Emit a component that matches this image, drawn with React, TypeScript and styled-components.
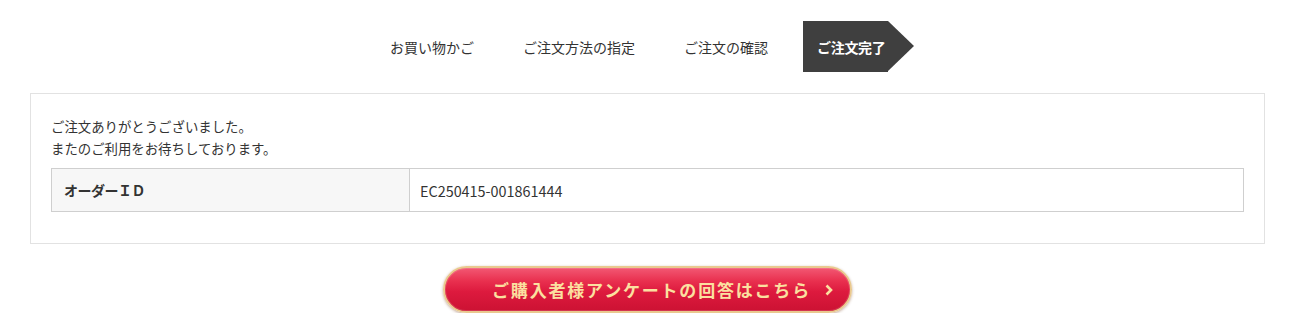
import styled, { createGlobalStyle } from "styled-components";

const GlobalStyle = createGlobalStyle`
  body {
    margin: 0;
    background: #fff;
    color: #333;
    font-family: "Noto Sans CJK JP", "Noto Sans", sans-serif;
  }
`;

const Page = styled.div`
  display: flex;
  flex-direction: column;
  align-items: center;
  padding-top: 21px;
`;

const Steps = styled.ol`
  list-style: none;
  margin: 0;
  padding: 0;
  display: flex;
  align-items: center;
  gap: 21px;
`;

const Step = styled.li<{ $active?: boolean }>`
  position: relative;
  display: flex;
  align-items: center;
  height: 51px;
  box-sizing: border-box;
  padding: ${(p) => (p.$active ? "0 1px 0 14px" : "0 14px")};
  width: ${(p) => (p.$active ? "85px" : "auto")};
  font-size: 14px;
  font-weight: ${(p) => (p.$active ? 700 : 400)};
  letter-spacing: ${(p) => (p.$active ? "-0.3px" : "0")};
  color: ${(p) => (p.$active ? "#fff" : "#333")};
  background: ${(p) => (p.$active ? "#3f3f3f" : "transparent")};
  white-space: nowrap;
  margin-right: ${(p) => (p.$active ? "31px" : "0")};

  &::after {
    content: "";
    display: ${(p) => (p.$active ? "block" : "none")};
    position: absolute;
    left: 100%;
    top: 0;
    border-style: solid;
    border-width: 25.5px 0 25.5px 26px;
    border-color: transparent transparent transparent #3f3f3f;
  }
`;

const Panel = styled.section`
  align-self: stretch;
  margin: 21px 30px 0;
  padding: 21px 20px 31px;
  border: 1px solid #e2e2e2;
`;

const Message = styled.p`
  margin: 0 0 9px;
  font-size: 13.4px;
  line-height: 22px;
`;

const Table = styled.table`
  width: 100%;
  border-collapse: collapse;
`;

const Th = styled.th`
  width: 358px;
  height: 43px;
  box-sizing: border-box;
  padding: 0 12px;
  text-align: left;
  font-weight: 700;
  font-size: 14px;
  letter-spacing: -0.5px;
  background: #f7f7f7;
  border: 1px solid #cfcfcf;
`;

const Td = styled.td`
  padding: 0 10px;
  font-size: 14.4px;
  border: 1px solid #cfcfcf;
`;

const SurveyButton = styled.a`
  display: flex;
  align-items: center;
  justify-content: center;
  gap: 14px;
  width: 409px;
  height: 47px;
  box-sizing: border-box;
  margin-top: 22px;
  border-radius: 24px;
  border: 2px solid #e9c98f;
  background: linear-gradient(
    to bottom,
    #f25873 0%,
    #e9304f 30%,
    #dd1a3e 55%,
    #cc1233 100%
  );
  box-shadow: 0 1px 3px rgba(120, 60, 20, 0.45),
    inset 0 0 0 1px rgba(255, 255, 255, 0.15);
  color: #fbe0a0;
  font-size: 17px;
  font-weight: 700;
  letter-spacing: 1.8px;
  text-decoration: none;
  padding-left: 30px;
  font-family: "Noto Sans CJK JP", sans-serif;
`;

const Chevron = styled.svg`
  width: 8px;
  height: 12px;
`;

export default function App() {
  return (
    <>
      <GlobalStyle />
      <Page>
        <Steps>
          <Step>お買い物かご</Step>
          <Step>ご注文方法の指定</Step>
          <Step>ご注文の確認</Step>
          <Step $active>ご注文完了</Step>
        </Steps>
        <Panel>
          <Message>
            ご注文ありがとうございました。
            <br />
            またのご利用をお待ちしております。
          </Message>
          <Table>
            <tbody>
              <tr>
                <Th>オーダーＩＤ</Th>
                <Td>EC250415-001861444</Td>
              </tr>
            </tbody>
          </Table>
        </Panel>
        <SurveyButton href="#">
          <span>ご購入者様アンケートの回答はこちら</span>
          <Chevron viewBox="0 0 8 12">
            <path d="M1.5 1.5 L6 6 L1.5 10.5" fill="none" stroke="#fbe0a0" strokeWidth="2.6" />
          </Chevron>
        </SurveyButton>
      </Page>
    </>
  );
}
